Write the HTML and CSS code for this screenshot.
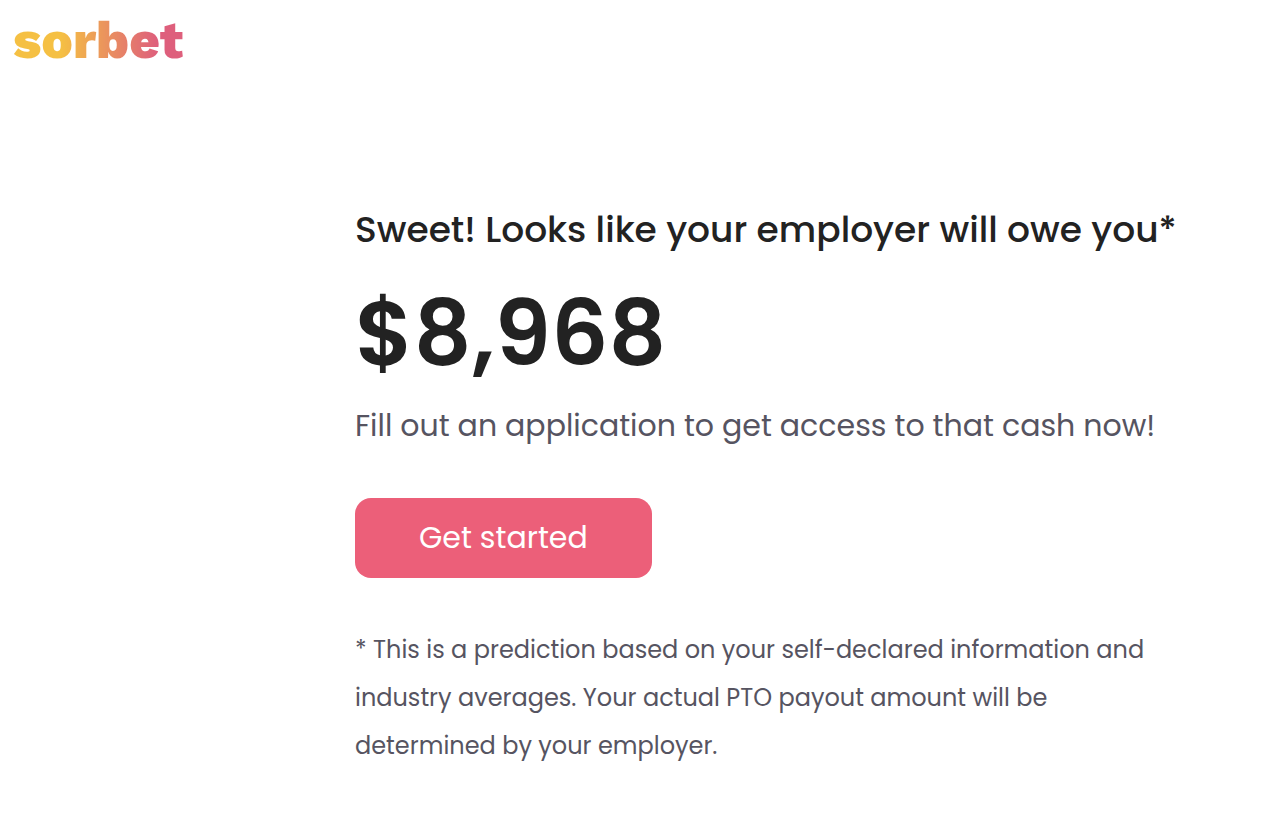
FILE: index.html
```html
<!DOCTYPE html>
<html lang="en">
<head>
    <meta charset="UTF-8">
    <meta name="viewport" content="width=device-width, initial-scale=1.0">
    <title>Sorbet</title>
    <link rel="stylesheet" href="styles.css">
</head>
<body>
    <header class="header">
        <a class="logo" href="#">sorbet</a>
    </header>
    <main class="result">
        <h1 class="title">Sweet! Looks like your employer will owe you*</h1>
        <p class="amount">$8,968</p>
        <p class="subtitle">Fill out an application to get access to that cash now!</p>
        <button class="start-button" type="button">Get started</button>
        <p class="note">* This is a prediction based on your self-declared information and industry averages. Your actual PTO payout amount will be determined by your employer.</p>
    </main>
</body>
</html>
```

FILE: styles.css
```css
* {
    box-sizing: border-box;
}
body {
    margin: 0;
    font-family: Poppins, Inter, "Open Sans", sans-serif;
    background-color: #fff;
    color: #222;
}
.header {
    padding: 8px 13px;
}
.logo {
    display: inline-block;
    font-family: "Work Sans", Inter, sans-serif;
    font-size: 53px;
    font-weight: 800;
    line-height: 64px;
    text-decoration: none;
    color: transparent;
    background: linear-gradient(90deg, #f5c043 28%, #de5f7c 85%);
    -webkit-background-clip: text;
    background-clip: text;
}
.result {
    padding: 122px 80px 48px 355px;
}
.title {
    margin: 0;
    font-size: 36px;
    font-weight: 500;
    line-height: 56px;
}
.amount {
    margin: 20px 0 12px;
    font-size: 90px;
    font-weight: 600;
    line-height: 112px;
}
.subtitle {
    margin: 0;
    font-size: 30px;
    line-height: 48px;
    color: #565461;
}
.start-button {
    display: block;
    margin: 48px 0;
    padding: 16px 64px;
    font-family: inherit;
    font-size: 30px;
    font-weight: 400;
    line-height: 48px;
    color: #fff;
    background-color: #ec5f79;
    border: none;
    border-radius: 16px;
    cursor: pointer;
}
.note {
    margin: 0;
    font-size: 24px;
    line-height: 48px;
    color: #565461;
}
```
